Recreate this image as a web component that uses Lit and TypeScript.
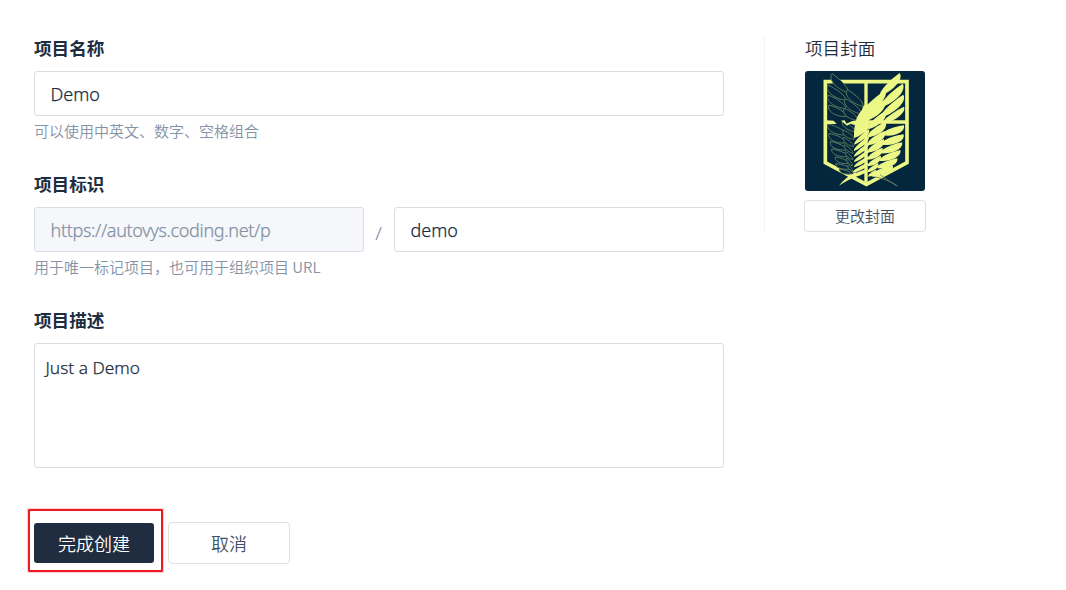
import { LitElement, html, svg, css } from "lit";
import { customElement } from "lit/decorators.js";

type Feather = [number, number, number, number, number];

// Each feather: root x, root y, tip x, tip y, width.
const solid: Feather[] = [
  [241, 90, 299, 21, 29], [244, 124, 308, 53, 31], [245, 154, 310, 86, 30], [248, 174, 312, 122, 25],
  [248, 208, 312, 178, 29], [246, 236, 311, 205, 29], [243, 262, 306, 229, 27], [239, 285, 301, 252, 26],
  [232, 307, 292, 277, 25], [217, 327, 279, 299, 24],
  [170, 164, 256, 72, 33], [195, 166, 253, 102, 32], [205, 190, 255, 136, 28], [204, 214, 256, 168, 28],
  [203, 238, 254, 195, 27], [203, 260, 251, 219, 26], [203, 281, 247, 245, 24], [203, 301, 242, 269, 20],
  [203, 319, 234, 291, 17], [205, 332, 228, 311, 14],
  [163, 216, 207, 168, 21], [163, 236, 207, 190, 18], [162, 255, 206, 210, 17], [162, 272, 206, 230, 16],
  [162, 288, 206, 251, 15], [162, 304, 205, 271, 15], [158, 320, 204, 290, 15], [155, 332, 203, 308, 15],
];

const outlined: Feather[] = [
  [143, 80, 96, 23, -28], [136, 103, 84, 57, -27], [136, 128, 84, 87, -26], [137, 152, 87, 117, -26],
  [188, 121, 142, 71, -27], [181, 143, 136, 98, -26], [171, 163, 133, 127, -24],
  [137, 207, 84, 174, -26], [137, 231, 87, 202, -25], [138, 252, 91, 226, -22], [143, 272, 95, 249, -20],
  [145, 292, 106, 273, -18], [149, 309, 107, 293, -16], [153, 324, 118, 309, -14],
  [164, 197, 128, 165, -19], [162, 220, 130, 192, -18], [160, 242, 131, 214, -15], [159, 262, 134, 236, -13],
  [158, 281, 137, 257, -12], [157, 300, 141, 276, -10], [157, 317, 145, 296, -9],
];

function featherPath([x1, y1, x2, y2, w]: Feather): string {
  const dx = x2 - x1;
  const dy = y2 - y1;
  const len = Math.hypot(dx, dy);
  const nx = (-dy / len) * w;
  const ny = (dx / len) * w;
  const p = (t: number, k: number) =>
    `${(x1 + dx * t + nx * k).toFixed(1)} ${(y1 + dy * t + ny * k).toFixed(1)}`;
  return `M${p(0, 0)}C${p(0.04, -0.45)} ${p(0.6, -0.32)} ${p(1, 0)}C${p(0.94, 0.7)} ${p(0.45, 0.72)} ${p(0, 0)}Z`;
}

@customElement("project-cover")
export class ProjectCover extends LitElement {
  static styles = css`
    :host { display: block; width: 120px; height: 120px; border-radius: 3px; overflow: hidden; }
    .art { display: block; width: 100%; height: 100%; }
    .bg { fill: #04273e; }
    .frame { fill: none; stroke: #edf786; stroke-width: 11; }
    .solid { fill: #edf786; }
    .bar { fill: none; stroke: #edf786; stroke-width: 10; }
    .outline { fill: #04273e; stroke: #5b7a5d; stroke-width: 3; }
    .thin { fill: none; stroke: #6d855e; stroke-width: 2.4; }
  `;

  render() {
    return html`
      <svg class="art" viewBox="15 15 360 360" aria-hidden="true">
        <rect class="bg" x="15" y="15" width="360" height="360" />
        <path class="frame" d="M76 47H321V290L199 355L76 290Z" />
        <path class="bar" d="M198 47V350M198 168H318" />
        ${outlined.map((f) => svg`<path class="outline" d=${featherPath(f)} />`)}
        <path class="solid" d="M80 163L101 164L110 174L80 174ZM123 164L134 163L139 173L157 165L174 163L166 178L151 173L141 179Z" />
        <path class="solid" d="M162 200Q163 162 186 131Q190 113 203 117L205 172L162 215Z" />
        ${solid.map((f) => svg`<path class="solid" d=${featherPath(f)} />`)}
        <path class="solid" d="M117 359Q137 334 166 319L182 327Q145 340 117 359ZM207 328Q228 312 264 318Q244 337 219 332Z" />
        <path class="thin" d="M221 332Q260 338 292 360Q267 345 240 326" />
      </svg>
    `;
  }
}

@customElement("app-root")
export class AppRoot extends LitElement {
  static styles = css`
    :host {
      display: block;
      box-sizing: border-box;
      height: 590px;
      overflow: hidden;
      background: #fff;
      color: #202d40;
      font: 18px/26px "Noto Sans", "Noto Sans CJK SC", sans-serif;
    }
    * { box-sizing: border-box; }
    .page { display: flex; padding: 36px 0 0 34px; }
    .form { width: 690px; }
    .field { height: 136px; }
    .label { display: block; height: 35px; font: 700 17.6px/24px "Noto Sans CJK SC", sans-serif; }
    .input, .area {
      display: block;
      width: 100%;
      margin: 0;
      border: 1px solid #d8dde4;
      border-radius: 3px;
      outline: none;
      background: #fff;
      color: #202d40;
      font: 300 18px/26px "Noto Sans", sans-serif;
      -webkit-text-stroke: 0.25px currentColor;
    }
    .input { height: 45px; padding: 0 16px 0 15.5px; }
    .fixed { background: #f5f7fa; color: #8592a6; letter-spacing: -0.34px; }
    .area { height: 125px; padding: 11px 10.5px; resize: none; font-size: 17.3px; }
    .hint { padding-top: 3px; font: 350 15px/24px "Noto Sans CJK SC", sans-serif; color: #8592a6; }
    .path { display: grid; grid-template-columns: 330px 30px 330px; }
    .slash { padding: 13px 1px 0 0; text-align: center; color: #76849a; font-weight: 300; font-size: 19px; }
    .side { width: 162px; height: 196px; margin-left: 40px; padding-left: 39px; border-left: 1px solid #f1f2f4; }
    .title { height: 35px; padding-left: 1px; font: 350 17.6px/24px "Noto Sans CJK SC", sans-serif; }
    .cover { margin-left: 1px; }
    .button {
      display: flex;
      align-items: center;
      justify-content: center;
      padding: 0;
      border: 1px solid #dcdfe3;
      border-radius: 4px;
      background: #fff;
      color: #425067;
      font: 350 18px/26px "Noto Sans CJK SC", sans-serif;
    }
    .change { width: 122px; height: 32px; margin-top: 9px; font-size: 15px; }
    .actions { display: flex; align-items: center; gap: 5px; padding: 41px 0 0 28px; }
    .marked { padding: 12px 7px 7px 4px; border: 2px solid #ed1c24; border-radius: 1px; box-shadow: 0 0 0 1px #fbd0d2; }
    .primary { width: 120px; height: 40px; border: 0; border-radius: 3px; background: #202d40; color: #fff; }
    .cancel { width: 122px; height: 42px; margin-top: 5px; }
  `;

  render() {
    return html`
      <main class="page">
        <section class="form">
          <div class="field">
            <label class="label">项目名称</label>
            <input class="input" .value=${"Demo"} />
            <div class="hint">可以使用中英文、数字、空格组合</div>
          </div>
          <div class="field">
            <label class="label">项目标识</label>
            <div class="path">
              <input class="input fixed" readonly .value=${"https://autovys.coding.net/p"} />
              <span class="slash">/</span>
              <input class="input" .value=${"demo"} />
            </div>
            <div class="hint">用于唯一标记项目，也可用于组织项目 URL</div>
          </div>
          <label class="label">项目描述</label>
          <textarea class="area" .value=${"Just a Demo"}></textarea>
        </section>
        <aside class="side">
          <div class="title">项目封面</div>
          <project-cover class="cover"></project-cover>
          <button class="button change">更改封面</button>
        </aside>
      </main>
      <footer class="actions">
        <div class="marked"><button class="button primary">完成创建</button></div>
        <button class="button cancel">取消</button>
      </footer>
    `;
  }
}
